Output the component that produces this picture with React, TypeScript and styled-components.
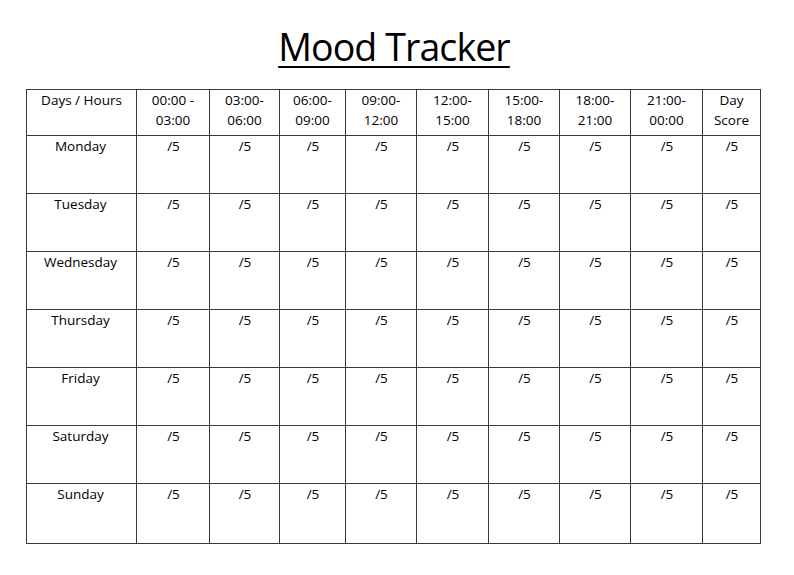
import styled, { createGlobalStyle } from 'styled-components'

const GlobalStyle = createGlobalStyle`
	body {
		margin: 0;
		background: #fff;
		font-family: "Open Sans", "Noto Sans", sans-serif;
		color: #000;
	}
`

const days = ['Monday', 'Tuesday', 'Wednesday', 'Thursday', 'Friday', 'Saturday', 'Sunday']
const hours = [
	['00:00 -', '03:00'],
	['03:00-', '06:00'],
	['06:00-', '09:00'],
	['09:00-', '12:00'],
	['12:00-', '15:00'],
	['15:00-', '18:00'],
	['18:00-', '21:00'],
	['21:00-', '00:00'],
	['Day', 'Score'],
]
const widths = [110, 73, 70, 66, 71, 72, 71, 71, 72, 58]

const Page = styled.div`
	width: 794px;
	height: 575px;
	padding-top: 24px;
	box-sizing: border-box;
`
const Title = styled.h1`
	margin: 0;
	padding-right: 6px;
	text-align: center;
	font-size: 37.5px;
	font-weight: 400;
	line-height: 46px;
	letter-spacing: -0.9px;
	color: #000;
	text-decoration: underline;
	text-decoration-thickness: 2px;
	text-underline-offset: 5px;
`
const Table = styled.table`
	margin: 19px 0 0 26px;
	border-collapse: collapse;
	table-layout: fixed;
	width: 735px;

	tbody tr:last-child td {
		height: 59px;
	}
`
const HeadCell = styled.th`
	border: 1px solid #3a3a3a;
	height: 45px;
	padding: 0;
	font-weight: 400;
	font-size: 13.5px;
	line-height: 20px;
	vertical-align: top;
	text-align: center;
`
const Cell = styled.td<{ $day?: boolean }>`
	border: 1px solid #3a3a3a;
	height: 57px;
	padding: 0;
	font-size: 13.5px;
	line-height: 20px;
	vertical-align: top;
	text-align: center;
	${(p) => (p.$day ? 'padding-right: 2px;' : 'padding-left: 1px;')}
`

export default function App() {
	return (
		<Page>
			<GlobalStyle />
			<Title>Mood Tracker</Title>
			<Table>
				<colgroup>
					{widths.map((w, i) => (
						<col key={i} style={{ width: w }} />
					))}
				</colgroup>
				<thead>
					<tr>
						<HeadCell>Days / Hours</HeadCell>
						{hours.map((h) => (
							<HeadCell key={h[1]}>
								{h[0]}
								<br />
								{h[1]}
							</HeadCell>
						))}
					</tr>
				</thead>
				<tbody>
					{days.map((d) => (
						<tr key={d}>
							<Cell $day>{d}</Cell>
							{hours.map((h) => (
								<Cell key={h[1]}>/5</Cell>
							))}
						</tr>
					))}
				</tbody>
			</Table>
		</Page>
	)
}
